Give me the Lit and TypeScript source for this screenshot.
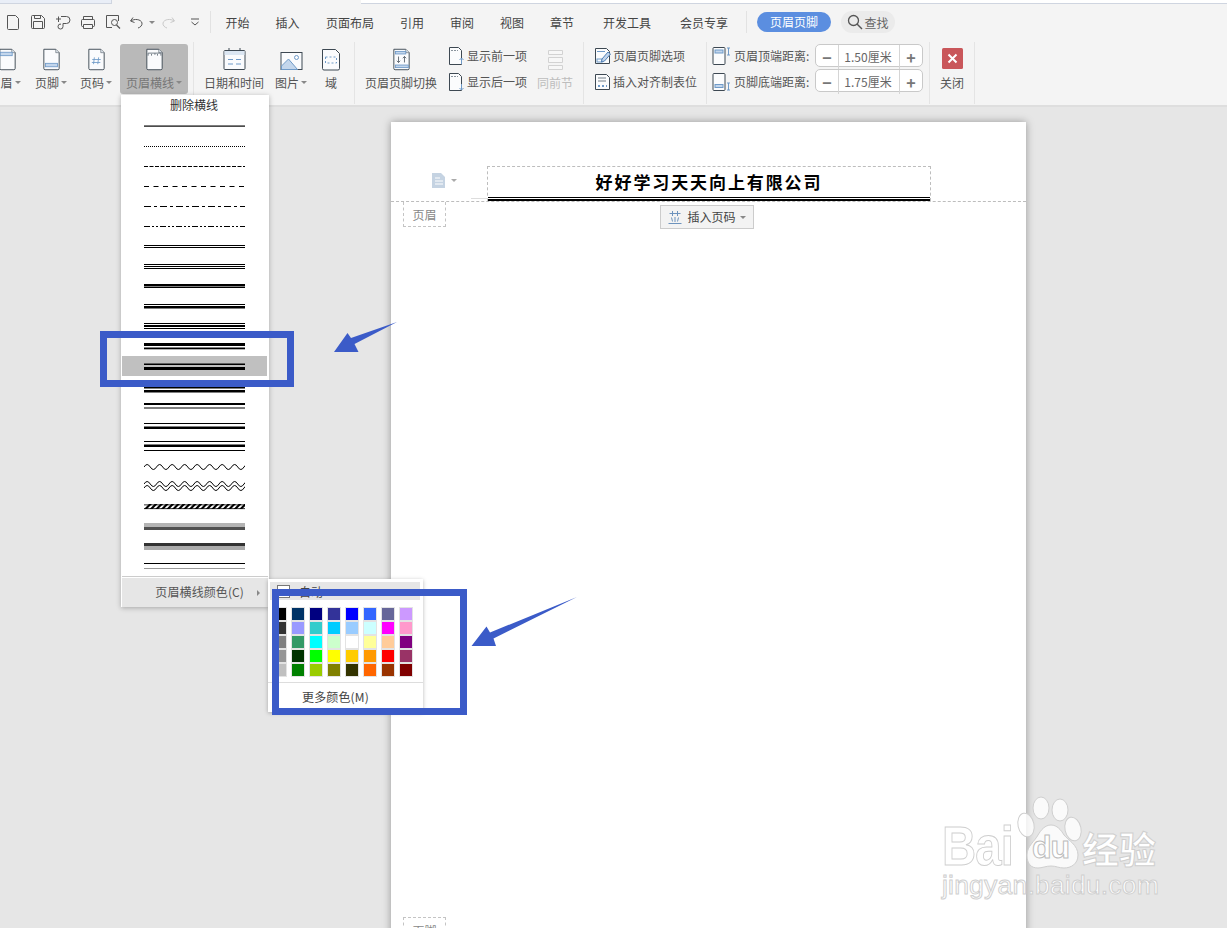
import { LitElement, html, css, svg } from "lit";
import { customElement } from "lit/decorators.js";

const D = "#3d4852";
const B = "#6f9ac8";
const L = "#c3d6ec";

const wrap = (w: number, h: number, c: unknown) =>
  html`<svg width=${w} height=${h} viewBox="0 0 ${w} ${h}" fill="none">${c}</svg>`;

const docShape = svg`<path d="M1.500 1.500h14l4 4v18.500a1.500 1.500 0 0 1-1.500 1.500H3A1.500 1.500 0 0 1 1.500 24z" fill="#fafbfd" stroke=${D} stroke-width="1.100"/><path d="M15.500 1.500v4h4" fill="#dfe6ee" stroke=${D} stroke-width=".6"/>`;
const doc = (c: unknown = "") =>
  html`<svg width="19" height="23" viewBox="0 0 21 27" fill="none">${docShape}${c}</svg>`;
const smallDoc = (c: unknown = "") =>
  wrap(17, 20, svg`<path d="M1.500 1.500h9l3 3v14h-12z" fill="#fbfcfd" stroke=${D}/>${c}`);

const icons = {
  header: doc(svg`<rect x="2" y="5" width="14" height="4" fill=${L} stroke=${B}/>`),
  footer: doc(svg`<rect x="3.500" y="18" width="14" height="4" fill=${L} stroke=${B}/>`),
  pageNo: doc(svg`<path d="M8 11l-1 8M13 11l-1 8M5.500 13.500h10M5 17h10" stroke=${B}/>`),
  hline: doc(svg`<path d="M3 6h15M3 6v3M18 6v3M7 7v2M11 6v2M14 7v2" stroke="#5f6b76"/>`),
  calendar: wrap(23, 24, svg`<rect x="1" y="3.500" width="21" height="19" rx="1" fill="#fafbfd" stroke=${D}/><path d="M6 1v5M17 1v5M10 3.500h3" stroke=${D}/><rect x="1.500" y="4" width="20" height="4" fill="#dbe6f2"/><path d="M5 12.500h5M13 12.500h5M5 17h5M13 17h5" stroke=${B}/>`),
  picture: wrap(23, 20, svg`<rect x="1" y="1.500" width="21" height="17" fill="#fafbfd" stroke=${D}/><path d="M1.500 15l7-7 9 10.500H1.500z" fill=${L} stroke=${B}/><circle cx="16.500" cy="6.500" r="2" stroke=${B}/>`),
  field: wrap(20, 23, svg`<path d="M1.500 1.500h13l4 4v15a1.500 1.500 0 0 1-1.500 1.500H3A1.500 1.500 0 0 1 1.500 20.500z" fill="#fafbfd" stroke=${D}/><rect x="4.500" y="9" width="11" height="6" stroke=${B} stroke-dasharray="2 2"/>`),
  swap: doc(svg`<rect x="3.500" y="4" width="12" height="3" fill=${L} stroke=${B}/><rect x="3.500" y="20" width="15" height="3" fill=${L} stroke=${B}/><path d="M7 10v7M5 15l2 2 2-2M14 17v-7M12 12l2-2 2 2" stroke=${D} stroke-width=".9"/>`),
  prev: smallDoc(svg`<path d="M3 4.500h7" stroke="#8a949d" stroke-dasharray="2 1"/><path d="M13.500 18v-6M11.500 14l2-2 2 2" stroke=${B}/>`),
  next: smallDoc(svg`<path d="M3 4.500h7" stroke="#8a949d" stroke-dasharray="2 1"/><path d="M13.500 12v6M11.500 16l2 2 2-2" stroke=${B}/>`),
  same: wrap(17, 22, svg`<g stroke="#d2d2d2" fill="#f7f7f7"><path d="M1.500 1.500h14v4h-14zM1.500 8.500h14v5h-14zM1.500 16.500h14v4h-14z"/></g>`),
  options: wrap(18, 18, svg`<path d="M1.500 1.500h11l3 3v12h-14z" fill="#fbfcfd" stroke=${D}/><path d="M3 4.500h8" stroke=${B}/><rect x="3" y="12" width="5" height="3" stroke=${B}/><path d="M8 12l6-7 2.500 2-6 7-3 1z" fill=${L} stroke="#4f7fb5"/>`),
  tabstop: wrap(18, 18, svg`<path d="M1.500 1.500h11l3 3v12h-14z" fill="#fbfcfd" stroke=${D}/><path d="M4 5h8M4 8h8" stroke="#75808a"/><path d="M4 13h2M8 13h2M12 13h1" stroke=${B} stroke-width="2"/>`),
  top: wrap(18, 20, svg`<rect x="1" y="1.500" width="12" height="17" rx="1" fill="#fbfcfd" stroke=${D}/><rect x="3" y="4" width="8" height="3" fill=${L} stroke=${B}/><path d="M15 2h3M16.500 2v7M15 9h3" stroke=${B}/>`),
  bottom: wrap(18, 20, svg`<rect x="1" y="1.500" width="12" height="17" rx="1" fill="#fbfcfd" stroke=${D}/><rect x="3" y="12.500" width="8" height="3" fill=${L} stroke=${B}/><path d="M15 11h3M16.500 11v7M15 18h3" stroke=${B}/>`),
  fileNew: wrap(14, 17, svg`<path d="M1.500 1.500h8l3 3v10a1 1 0 0 1-1 1h-9a1 1 0 0 1-1-1z" stroke="#555"/>`),
  save: wrap(16, 16, svg`<path d="M1.500 2.500a1 1 0 0 1 1-1h9l3 3v9a1 1 0 0 1-1 1h-11a1 1 0 0 1-1-1z M3.500 14.500v-7h9v7 M4.500 1.500v3h6v-3" stroke="#555"/>`),
  brush: wrap(16, 18, svg`<path d="M6 3.500h5.500a3 3 0 0 1 0 7H8v3a2.500 2.500 0 1 1-2-2.400M1 6h5M3.500 3.500V9" stroke="#555"/>`),
  print: wrap(16, 15, svg`<path d="M3.500 4.500v-3h9v3M3.500 11.500h-1a1 1 0 0 1-1-1v-5a1 1 0 0 1 1-1h11a1 1 0 0 1 1 1v5a1 1 0 0 1-1 1h-1M3.500 9.500h9v4h-9z" stroke="#555"/>`),
  preview: wrap(16, 16, svg`<path d="M13.500 7V1.500h-12v12H7" stroke="#555"/><circle cx="9.500" cy="8.500" r="3" stroke="#555"/><path d="M11.500 11l3.500 3.500" stroke="#555" stroke-width="1.300"/>`),
  undo: wrap(15, 13, svg`<path d="M4 1.500L1.500 5 5.500 6.500M2 5c3-2.500 10-2 11 2 .5 2.500-2 4.500-4 5" stroke="#555"/>`),
  redo: wrap(15, 13, svg`<path d="M11 1.500L13.500 5 9.500 6.500M13 5c-3-2.500-10-2-11 2-.5 2.500 2 4.500 4 5" stroke="#c9c9c9"/>`),
  more: wrap(10, 9, svg`<path d="M1 1h8M1.500 4l3.500 3 3.500-3" stroke="#555"/>`),
  search: wrap(16, 16, svg`<circle cx="6.500" cy="6.500" r="5" stroke="#555" stroke-width="1.300"/><path d="M10 10l5 5" stroke="#555" stroke-width="1.400"/>`),
  headDoc: wrap(13, 15, svg`<path d="M0 0h9l4 4v11H0z" fill="#c5d3e2"/><path d="M3 5h5M3 8h8M3 11h8" stroke="#fff"/>`),
  insert: wrap(14, 15, svg`<path d="M1.500 3.500h11M4.500 1v5M9.500 1v5M3.500 7.500l1 4M10.500 7.500l-1 4M7 7v5M0.500 13.500h13" stroke="#6d93bd"/>`),
  close: wrap(21, 21, svg`<rect width="21" height="21" rx="1.500" fill="#c9565a"/><path d="M6.500 6.500l8 8M14.500 6.500l-8 8" stroke="#fff" stroke-width="2"/>`),
};

const r = (y: number, h: number, fill = "#000") => svg`<rect x="0" y=${y} width="101" height=${h} fill=${fill}/>`;
const dash = (pattern: string) =>
  svg`<path d="M0 10.500h101" stroke="#000" stroke-dasharray=${pattern}/>`;
const wave = (y: number, period: number) => {
  let d = `M0 ${y}`;
  for (let x = 0; x < 101; x += period) {
    d += ` q${period / 4} -5 ${period / 2} 0 t${period / 2} 0`;
  }
  return svg`<path d=${d} stroke="#000"/>`;
};
const hatch = () => {
  const parts = [];
  for (let x = 0; x < 101; x += 5.6) {
    parts.push(svg`<path d="M${x} 13l5-5h3l-5 5z" fill="#000"/>`);
  }
  return svg`${r(8.500, .8)}${r(12.300, .8)}${parts}`;
};

const LINES = [
  r(9.500, 1.200),
  dash("1 1"),
  dash("4 1.500"),
  dash("5 4.500"),
  dash("7 3 3 3"),
  dash("6 2 2 2 2 2"),
  svg`${r(9, 1)}${r(11, 1)}`,
  svg`${r(8, 1)}${r(10, 1)}${r(12, 1)}`,
  svg`${r(8, 2.500)}${r(11, 1)}`,
  svg`${r(8, 1)}${r(10, 2.500)}`,
  svg`${r(7, 1)}${r(9, 2)}${r(12, 1)}`,
  svg`${r(7, 3)}${r(11.500, 1.800)}`,
  svg`${r(7.500, 1.500)}${r(11, 3)}`,
  svg`${r(11, 1.500)}${r(14, 2.500)}`,
  svg`${r(7, 2)}${r(11.500, 1)}`,
  svg`${r(7, 1)}${r(10.500, 2.500)}`,
  svg`${r(5, 1)}${r(8.500, 2.500)}${r(14, 1)}`,
  wave(11, 12.500),
  svg`${wave(8, 12.500)}${wave(12, 12.500)}`,
  hatch(),
  svg`${r(7, 4, "#b4b4b4")}${r(11, 3, "#505050")}`,
  svg`${r(7, 3, "#333")}${r(10, 4, "#aaa")}`,
  svg`${r(7, 1)}${r(12, 1, "#999")}`,
];

const COLORS = [
  "000000", "003366", "000080", "333399", "0000ff", "3366ff", "666699", "cc99ff",
  "333333", "9999ff", "33cccc", "00ccff", "99ccff", "ccffff", "ff00ff", "ff99cc",
  "808080", "339966", "00ffff", "ccffcc", "ffffff", "ffff99", "ffcc99", "800080",
  "969696", "003300", "00ff00", "ffff00", "ffcc00", "ff9900", "ff0000", "993366",
  "c0c0c0", "008000", "99cc00", "808000", "333300", "ff6600", "993300", "800000",
];

@customElement("app-root")
export class AppRoot extends LitElement {
  static styles = css`
    :host {
      display: block;
      position: relative;
      width: 1227px;
      height: 928px;
      overflow: hidden;
      background: #e6e6e6;
      font-family: "Noto Sans CJK SC", "Liberation Sans", sans-serif;
      font-size: 12px;
      color: #555;
    }
    svg { display: block; }
    .strip { height: 4px; display: flex; background: #fff; box-sizing: border-box; border-bottom: 1px solid #cfd5e0; }
    .strip .tab { width: 111px; background: #e9eef7; border-right: 1px solid #cfd5e0; }
    .strip .gap { width: 249px; background: #f4f4f4; margin-bottom: -1px; }
    .toolbar { background: #f4f4f4; height: 107px; box-sizing: border-box; border-bottom: 2px solid #dedede; }
    .tabs {
      height: 36px;
      display: grid;
      grid-template-columns: 25px 25px 25px 25px 25px 22px 10px 23px 30px 1px 53px 47px 78px 46px 54px 46px 54px 76px 78px 3px 1px 10px 74px 10px 54px;
      align-items: center;
      justify-items: center;
      color: #444;
    }
    .vsep { width: 1px; height: 22px; background: #e2e2e2; }
    .pill { width: 100%; height: 20px; line-height: 20px; text-align: center; border-radius: 10px; background: #5b8ee0; color: #fff; }
    .find { width: 100%; height: 22px; border-radius: 11px; background: #ebebeb; display: flex; align-items: center; justify-content: center; gap: 1px; color: #666; }
    .ribbon {
      height: 65px;
      margin-left: -17px;
      display: grid;
      grid-template-columns: 43px 50px 40px 4px 68px 5px 1px 80px 34px 46px 1px 92px 85px 46px 5px 1px 122px 1px 108px 108px 6px 1px 44px 1px;
    }
    .sep { background: #e4e4e4; margin: 2px 0 1px; }
    .item { display: flex; flex-direction: column; align-items: center; padding-top: 7px; }
    .ic { height: 24px; display: flex; align-items: flex-end; justify-content: center; }
    .lab { display: flex; align-items: center; gap: 2px; height: 16px; margin-top: 3px; white-space: nowrap; }
    .shift { margin-left: 6px; }
    .caret { width: 0; height: 0; border: 3px solid transparent; border-top-color: #888; border-bottom: 0; }
    .item.active { background: #b9b9b9; border-radius: 3px; margin: 4px 0 11px; padding-top: 3px; color: #777; }
    .item.active .lab { margin-top: 3px; }
    .item.dim .lab { color: #bdbdbd; }
    .stack { display: flex; flex-direction: column; gap: 2px; padding-top: 4px; }
    .row { display: flex; align-items: center; height: 24px; gap: 2px; white-space: nowrap; }
    .row span { margin-top: -2px; }
    .rowa { padding-left: 1px; }
    .rowb { padding-left: 10px; gap: 1px; }
    .rowc { padding-left: 5px; gap: 4px; }
    .stepper { width: 108px; height: 23px; box-sizing: border-box; border: 1px solid #c9c9c9; border-radius: 5px; background: #fff; display: grid; grid-template-columns: 22px 1fr 22px; align-items: center; text-align: center; color: #666; }
    .stepper span { height: 100%; display: flex; align-items: center; justify-content: center; box-sizing: border-box; padding: 0 2px 1px 0; }
    .stepper .mid { border-left: 1px solid #d5d5d5; border-right: 1px solid #d5d5d5; }
    .stepper .sign { font-size: 16px; font-weight: 700; color: #777; padding: 0; }
    .close-ic { height: 29px; display: flex; align-items: flex-start; padding-top: 1px; margin-bottom: -6px; }

    .work { padding-top: 15px; display: flex; }
    .page {
      margin-left: 391px;
      width: 635px;
      height: 900px;
      background: #fff;
      box-shadow: 0 0 8px rgba(0, 0, 0, .35);
      display: flex;
      flex-direction: column;
      flex: none;
    }
    .head { height: 80px; padding: 44px 0 0 41px; box-sizing: border-box; border-bottom: 1px dashed #bdbdbd; display: flex; }
    .head-ic { padding-top: 7px; display: flex; gap: 6px; align-items: flex-start; }
    .head-ic .caret { margin-top: 6px; border-top-color: #aaa; }
    .box { position: relative; margin-left: 30px; width: 444px; height: 35px; box-sizing: border-box; border: 1px dashed #bdbdbd; border-bottom: 0; display: flex; flex-direction: column; }
    .box::before { content: ""; position: absolute; left: -17px; bottom: 2px; width: 17px; height: 1px; background: #ddd; }
    .title { flex: 1; display: flex; align-items: center; justify-content: center; font-size: 17px; font-weight: 700; letter-spacing: 1.900px; color: #000; margin-top: -1px; }
    .rule { height: 1px; background: #000; border-bottom: 1px solid #fff; }
    .rule2 { height: 2px; background: #000; }
    .under { display: flex; align-items: flex-start; }
    .tag { width: 43px; height: 25px; box-sizing: border-box; border: 1px dashed #c4c4c4; border-top: 0; margin-left: 12px; display: flex; align-items: center; justify-content: center; color: #888; }
    .foot { border-top: 1px dashed #c4c4c4; border-bottom: 0; margin-top: 688px; height: 25px; }
    .insert { margin: 3px 0 0 214px; width: 94px; height: 24px; box-sizing: border-box; background: #f3f3f3; border: 1px solid #ccc; display: flex; align-items: center; justify-content: center; gap: 4px; color: #444; }
    .insert span { margin: -1px 0 0 1px; }

    .menu { position: absolute; left: 121px; top: 95px; width: 148px; height: 512px; box-sizing: border-box; padding: 0 1px; background: #fff; box-shadow: 0 1px 5px rgba(0, 0, 0, .28); color: #333; }
    .menu .del { height: 21px; line-height: 19px; text-align: center; padding-right: 2px; box-sizing: border-box; }
    .lrow { height: 20px; padding-left: 22px; width: 145px; box-sizing: border-box; }
    .lrow.on { background: #c0c0c0; }
    .msep { height: 1px; background: #ccc; }
    .mcolor { margin-top: 1px; height: 29px; width: 146px; background: #e6e6e6; display: flex; align-items: center; justify-content: flex-end; gap: 13px; padding-right: 8px; box-sizing: border-box; color: #555; }
    .mcolor span { margin-top: -2px; letter-spacing: .1px; }
    .mcolor .tri { width: 0; height: 0; border: 3px solid transparent; border-left-color: #888; border-right: 0; }

    .sub { position: absolute; left: 268px; top: 579px; width: 155px; height: 133px; box-sizing: border-box; background: #fff; box-shadow: 0 1px 4px rgba(0, 0, 0, .28); }
    .auto { margin: 3px 3px 0 2px; height: 18px; background: #e6e6e6; display: flex; align-items: center; gap: 9px; padding-left: 7px; color: #444; }
    .chk { width: 13px; height: 13px; box-sizing: border-box; background: #fff; border: 1px solid #777; }
    .swatches { margin: 8px 0 0 6px; display: grid; grid-template-columns: repeat(8, 12px); grid-auto-rows: 12px; column-gap: 6px; row-gap: 2px; }
    .swatches i { display: block; outline: 1px solid #e3e3e3; }
    .msep2 { margin-top: 6px; height: 1px; background: #ddd; }
    .more { height: 29px; line-height: 27px; padding-left: 34px; color: #444; letter-spacing: .15px; }

    .mark { position: absolute; box-sizing: border-box; border: 7px solid #3b5bc8; }
    .m1 { left: 100px; top: 331px; width: 194px; height: 56px; }
    .m2 { left: 272px; top: 589px; width: 195px; height: 126px; }
    .arrow { position: absolute; left: 0; top: 0; }

    .wm { position: absolute; left: 942px; top: 796px; width: 225px; height: 110px; color: #fff; font-family: "Liberation Sans", sans-serif; -webkit-text-stroke: 1px #cfcfcf; }
    .wm span { position: absolute; white-space: nowrap; }
    .wm svg { position: absolute; left: 80px; top: 0; overflow: visible; }
    .wm .bai { left: 0; top: 28px; font-size: 55px; line-height: 45px; font-weight: 700; letter-spacing: -1px; transform: scaleX(.86); transform-origin: left; }
    .wm .du { left: 90px; top: 35px; font-size: 32px; line-height: 32px; font-weight: 700; letter-spacing: -1px; color: #fff; -webkit-text-stroke: 1px #bcbcbc; }
    .wm .jy { left: 140px; top: 31px; font-family: "Noto Sans CJK SC", sans-serif; font-size: 37px; line-height: 42px; font-weight: 700; }
    .wm .url { left: 0; top: 74px; font-size: 26.500px; line-height: 30px; letter-spacing: .2px; }
  `;

  private tabs = ["开始", "插入", "页面布局", "引用", "审阅", "视图", "章节", "开发工具", "会员专享"];

  private item(icon: unknown, text: string, caret = false, extra = "") {
    return html`<div class="item ${extra}">
      <div class="ic">${icon}</div>
      <div class="lab">${text}${caret ? html`<i class="caret"></i>` : ""}</div>
    </div>`;
  }

  private stepper(v: string) {
    return html`<div class="stepper"><span class="sign">−</span><span class="mid">${v}</span><span class="sign">+</span></div>`;
  }

  render() {
    return html`
      <div class="toolbar">
        <div class="strip"><div class="tab"></div><div class="gap"></div></div>
        <div class="tabs">
          ${icons.fileNew}${icons.save}${icons.brush}${icons.print}${icons.preview}${icons.undo}<i class="caret"></i>${icons.redo}${icons.more}
          <div class="vsep"></div>
          ${this.tabs.map((t) => html`<div>${t}</div>`)}
          <div></div>
          <div class="vsep"></div>
          <div></div>
          <div class="pill">页眉页脚</div>
          <div></div>
          <div class="find">${icons.search}<span>查找</span></div>
        </div>
        <div class="ribbon">
          ${this.item(html`<div class="shift">${icons.header}</div>`, "页眉", true)}
          ${this.item(icons.footer, "页脚", true)}
          ${this.item(icons.pageNo, "页码", true)}
          <div></div>
          ${this.item(icons.hline, "页眉横线", true, "active")}
          <div></div>
          <div class="sep"></div>
          ${this.item(icons.calendar, "日期和时间")}
          ${this.item(icons.picture, "图片", true)}
          ${this.item(icons.field, "域")}
          <div class="sep"></div>
          ${this.item(icons.swap, "页眉页脚切换")}
          <div class="stack">
            <div class="row rowa">${icons.prev}<span>显示前一项</span></div>
            <div class="row rowa">${icons.next}<span>显示后一项</span></div>
          </div>
          ${this.item(icons.same, "同前节", false, "dim")}
          <div></div>
          <div class="sep"></div>
          <div class="stack">
            <div class="row rowb">${icons.options}<span>页眉页脚选项</span></div>
            <div class="row rowb">${icons.tabstop}<span>插入对齐制表位</span></div>
          </div>
          <div class="sep"></div>
          <div class="stack">
            <div class="row rowc">${icons.top}<span>页眉顶端距离:</span></div>
            <div class="row rowc">${icons.bottom}<span>页脚底端距离:</span></div>
          </div>
          <div class="stack">
            ${this.stepper("1.50厘米")}
            ${this.stepper("1.75厘米")}
          </div>
          <div></div>
          <div class="sep"></div>
          <div class="item">
            <div class="close-ic">${icons.close}</div>
            <div class="lab">关闭</div>
          </div>
          <div class="sep"></div>
        </div>
      </div>

      <div class="work">
        <div class="page">
          <div class="head">
            <div class="head-ic">${icons.headDoc}<i class="caret"></i></div>
            <div class="box">
              <div class="title">好好学习天天向上有限公司</div>
              <div class="rule"></div>
              <div class="rule2"></div>
            </div>
          </div>
          <div class="under">
            <div class="tag">页眉</div>
            <div class="insert">${icons.insert}<span>插入页码</span><i class="caret"></i></div>
          </div>
          <div class="tag foot">页脚</div>
        </div>
      </div>

      <div class="menu">
        <div class="del">删除横线</div>
        ${LINES.map(
          (l, i) => html`<div class="lrow ${i === 12 ? "on" : ""}">
            <svg width="101" height="20" viewBox="0 0 101 20" fill="none">${l}</svg>
          </div>`
        )}
        <div class="msep"></div>
        <div class="mcolor"><span>页眉横线颜色(C)</span><i class="tri"></i></div>
      </div>

      <div class="sub">
        <div class="auto"><i class="chk"></i><span>自动</span></div>
        <div class="swatches">
          ${COLORS.map((c) => html`<i style="background:#${c}"></i>`)}
        </div>
        <div class="msep2"></div>
        <div class="more">更多颜色(M)</div>
      </div>

      <div class="mark m1"></div>
      <div class="mark m2"></div>
      <svg class="arrow" width="1227" height="928" viewBox="0 0 1227 928">
        <path d="M334 352L347.500 333 351 338 397 322 354.500 344 358.500 352z" fill="#3b5bc8" />
        <path d="M471.500 646L486.500 626.500 490 632.500 577 597 493.500 638.500 496 646z" fill="#3b5bc8" />
      </svg>

      <div class="wm">
        <span class="bai">Bai</span>
        <svg width="70" height="76" viewBox="0 0 70 76">
          <g fill="rgba(255,255,255,.8)" stroke="#cfcfcf">
            <ellipse cx="19" cy="12" rx="8" ry="11" />
            <ellipse cx="38" cy="14" rx="8" ry="11" />
            <ellipse cx="4" cy="29" rx="8" ry="12" transform="rotate(-12 4 29)" />
            <ellipse cx="51" cy="33" rx="8" ry="12" transform="rotate(-12 51 33)" />
            <path d="M29 29c6 0 10 5 13 10 4 5 14 10 14 20 0 9-7 13-14 13-5 0-8-2-13-2s-9 2-13 2C9 72 5 68 5 59c0-9 8-14 11-20 3-5 7-10 13-10z" />
          </g>
        </svg>
        <span class="du">du</span>
        <span class="jy">经验</span>
        <span class="url">jingyan.baidu.com</span>
      </div>
    `;
  }
}
